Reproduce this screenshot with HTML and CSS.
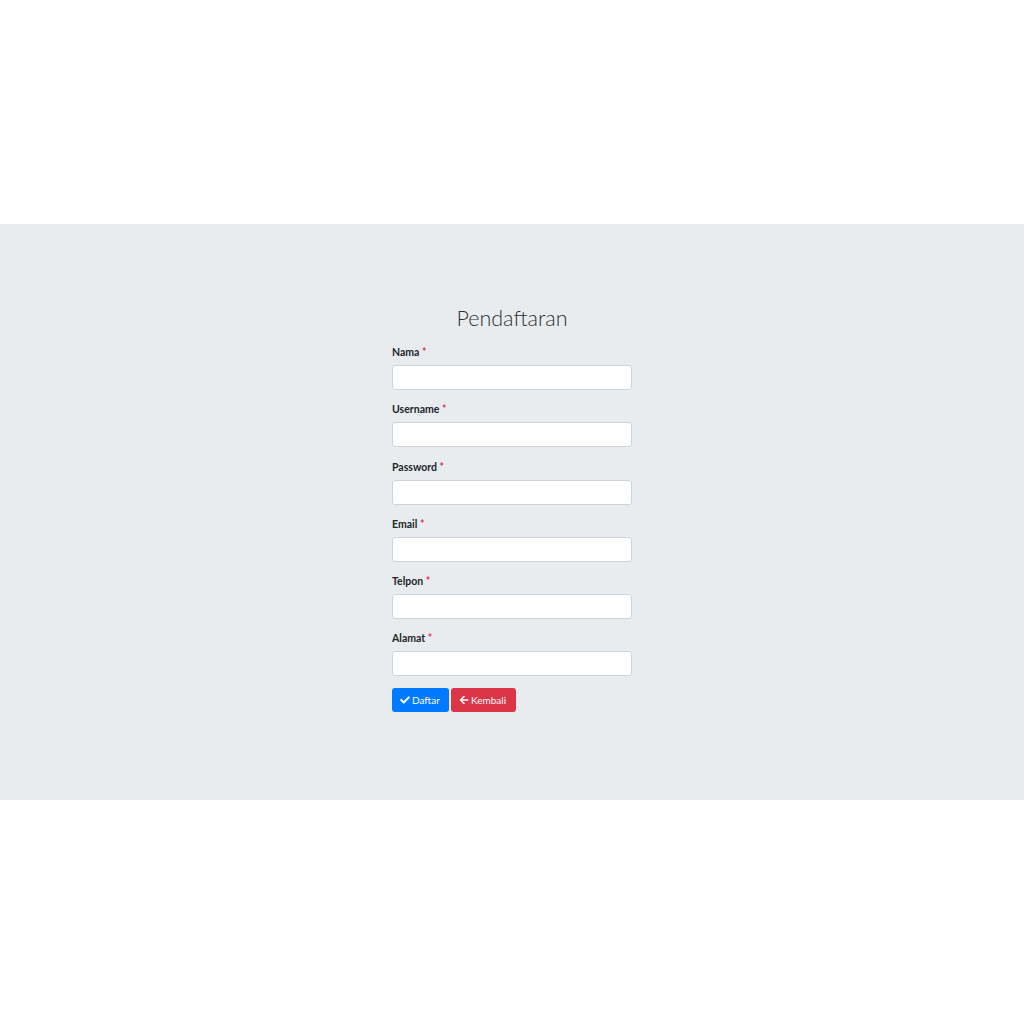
FILE: index.html
```html
<!DOCTYPE html>
<html>
<head>
<meta charset="utf-8">
<link rel="stylesheet" href="styles.css">
</head>
<body>
<div class="top"></div>
<section class="band">
  <form class="form">
    <h1 class="title">Pendaftaran</h1>
    <div class="group"><label class="label">Nama <span class="req">*</span></label><input class="input" type="text"></div>
    <div class="group"><label class="label">Username <span class="req">*</span></label><input class="input" type="text"></div>
    <div class="group"><label class="label">Password <span class="req">*</span></label><input class="input" type="password"></div>
    <div class="group"><label class="label">Email <span class="req">*</span></label><input class="input" type="text"></div>
    <div class="group"><label class="label">Telpon <span class="req">*</span></label><input class="input" type="text"></div>
    <div class="group"><label class="label">Alamat <span class="req">*</span></label><input class="input" type="text"></div>
    <div class="actions">
      <button type="button" class="btn btn-blue"><svg class="ico" viewBox="0 0 512 512"><path fill="currentColor" d="M173.9 439.4l-166.4-166.4c-10-10-10-26.2 0-36.2l36.2-36.2c10-10 26.2-10 36.2 0L192 312.7 432.1 72.6c10-10 26.2-10 36.2 0l36.2 36.2c10 10 10 26.2 0 36.2L210.1 439.4c-10 10-26.2 10-36.2 0z"/></svg>Daftar</button>
      <button type="button" class="btn btn-red"><svg class="ico" viewBox="0 0 448 512"><path fill="currentColor" d="M257.5 445.1l-22.2 22.2c-9.4 9.4-24.6 9.4-33.9 0L7 273c-9.4-9.4-9.4-24.6 0-33.9L201.4 44.7c9.4-9.4 24.6-9.4 33.9 0l22.2 22.2c9.500 9.5 9.3 25-.4 34.3L136.6 216H424c13.3 0 24 10.7 24 24v32c0 13.3-10.7 24-24 24H136.6l120.5 114.8c9.8 9.3 10 24.8.4 34.3z"/></svg>Kembali</button>
    </div>
  </form>
</section>
</body>
</html>
```

FILE: styles.css
```css
html, body {
  margin: 0;
  padding: 0;
  background: #ffffff;
  font-family: Lato, "Open Sans", "Liberation Sans", sans-serif;
  color: #212529;
}
.top {
  height: 224px;
}
.band {
  height: 576px;
  box-sizing: border-box;
  background: #e9ecef;
  padding-top: 80px;
  display: flex;
  justify-content: center;
}
.form {
  width: 240px;
  display: flex;
  flex-direction: column;
}
.title {
  margin: 0 0 13px 0;
  font-size: 21.5px;
  line-height: 28px;
  font-weight: 300;
  text-align: center;
  color: #2b2f33;
}
.group {
  display: flex;
  flex-direction: column;
  margin-bottom: 12.25px;
}
.label {
  font-size: 10.5px;
  line-height: 15px;
  font-weight: 700;
  margin-bottom: 5px;
}
.req {
  color: #dc3545;
}
.input {
  height: 25px;
  box-sizing: border-box;
  border: 1px solid #ced4da;
  border-radius: 3px;
  background: #ffffff;
  margin: 0;
  padding: 0 8px;
}
.actions {
  display: flex;
  gap: 2px;
  margin-top: -1px;
}
.btn {
  height: 24px;
  box-sizing: border-box;
  border: none;
  border-radius: 3px;
  color: #ffffff;
  font-family: Lato, "Open Sans", "Liberation Sans", sans-serif;
  font-size: 10px;
  padding: 0 8px;
  display: flex;
  align-items: center;
  gap: 2px;
}
.btn-blue {
  background: #007bff;
  width: 57px;
}
.btn-red {
  background: #dc3545;
  width: 65px;
}
.ico {
  width: 10px;
  height: 10px;
}
```
